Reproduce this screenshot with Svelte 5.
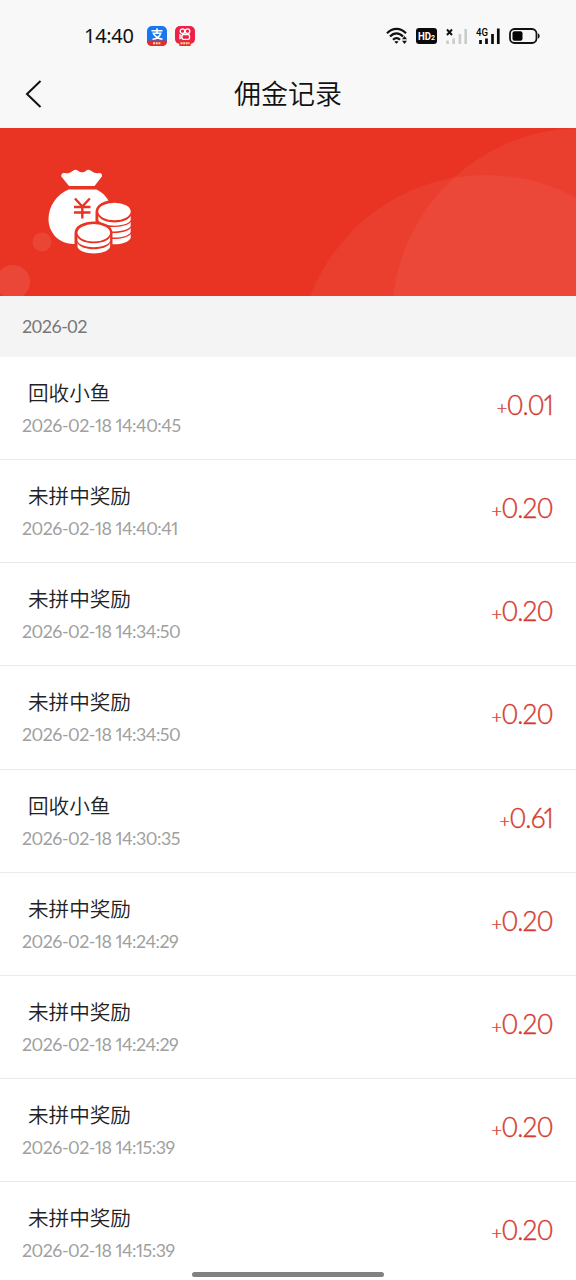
<script lang="ts">
  type CommissionRecord = { title: string; time: string; amount: string };

  const month = '2026-02';

  const records: CommissionRecord[] = [
    { title: '回收小鱼', time: '2026-02-18 14:40:45', amount: '0.01' },
    { title: '未拼中奖励', time: '2026-02-18 14:40:41', amount: '0.20' },
    { title: '未拼中奖励', time: '2026-02-18 14:34:50', amount: '0.20' },
    { title: '未拼中奖励', time: '2026-02-18 14:34:50', amount: '0.20' },
    { title: '回收小鱼', time: '2026-02-18 14:30:35', amount: '0.61' },
    { title: '未拼中奖励', time: '2026-02-18 14:24:29', amount: '0.20' },
    { title: '未拼中奖励', time: '2026-02-18 14:24:29', amount: '0.20' },
    { title: '未拼中奖励', time: '2026-02-18 14:15:39', amount: '0.20' },
    { title: '未拼中奖励', time: '2026-02-18 14:15:39', amount: '0.20' }
  ];
</script>

<div class="screen">
  <header>
    <div class="status-bar">
      <span class="clock">14:40</span>
      <svg class="app-icon" width="20" height="20" viewBox="0 0 20 20">
        <rect width="20" height="20" rx="5" fill="#1777f2" />
        <path d="M0 14.5h20v1a4.5 4.5 0 0 1-4.5 4.5h-11A4.5 4.5 0 0 1 0 15.5z" fill="#e52b2b" />
        <path d="M4.5 4.7h11M10 2.2v5M5.5 7.3h8.2c-1 3.2-4 5.7-8.2 5.9M6.5 8c2 2.5 5 4.7 9 5.2" fill="none" stroke="#fff" stroke-width="1.6" />
        <path d="M6 17.2h8" stroke="#ffdc9b" stroke-width="2" stroke-dasharray="2 .7" />
      </svg>
      <svg class="app-icon" width="20" height="20" viewBox="0 0 20 20">
        <rect width="20" height="18" rx="5" fill="#ef2048" />
        <path d="M3.5 14.5h13l-1 5.5h-11z" fill="#e43232" />
        <g fill="none" stroke="#fff" stroke-width="1.3">
          <circle cx="7.5" cy="5.2" r="2.3" />
          <circle cx="12.5" cy="5.2" r="2.3" />
          <rect x="7" y="8.5" width="7.5" height="4.8" rx="1.4" />
          <path d="M7 10.2 5 9v3.5l2-1" />
        </g>
        <path d="M5.5 17.2h9" stroke="#ffdc9b" stroke-width="2" stroke-dasharray="2 .6" />
      </svg>
      <div class="indicators">
        <svg width="22" height="18" viewBox="0 0 22 18">
          <g fill="none" stroke="#111" stroke-width="2.2">
            <path d="M1 6.3C6.5.5 14.5.5 20 6.3" />
            <path d="M4 9.6c4-4.2 9.2-4.2 13 0" />
            <path d="M7 12.7c2.2-2.2 5-2.2 7 0" />
          </g>
          <path d="M8.3 14.7q2.2-1.5 4.2 0l-2 2z" fill="#111" />
          <path d="m18.5 9 2.5 3.2h-5zM18.5 17l2.5-3.2h-5z" fill="#111" />
        </svg>
        <svg width="22" height="16" viewBox="0 0 22 16">
          <rect width="21" height="16" rx="3" fill="#0b0b0b" />
          <text class="hd" x="2" y="12" textLength="17" lengthAdjust="spacingAndGlyphs">HD<tspan class="hd-sim">2</tspan></text>
        </svg>
        <svg width="22" height="18" viewBox="0 0 22 18">
          <path d="m1 2.5 5 5.5M6 2.5 1 8" stroke="#111" stroke-width="1.9" />
          <path d="M1.5 17v-3.5M7.7 17v-5.5M13.9 17V7M19.7 17V2" stroke="#cbcbcb" stroke-width="2.6" />
        </svg>
        <svg class="signal" width="24" height="18" viewBox="0 0 24 18">
          <text class="network" x="0" y="9" textLength="12" lengthAdjust="spacingAndGlyphs">4G</text>
          <path d="M4.5 17v-4M10.5 17v-5.5M16.5 17V7M22.3 17V1.5" stroke="#0b0b0b" stroke-width="2.7" />
        </svg>
        <svg width="31" height="16" viewBox="0 0 31 16">
          <rect x="1" y="1" width="26.5" height="14" rx="4.5" fill="none" stroke="#111" stroke-width="1.8" />
          <rect x="3.5" y="3.3" width="10" height="9.4" rx="2" fill="#050505" />
          <path d="M29 5.5c2.2.5 2.2 4.5 0 5z" fill="#111" />
        </svg>
      </div>
    </div>
    <div class="nav-bar">
      <svg class="back" width="18" height="28" viewBox="0 0 18 28">
        <path d="M15.5 1 2 14l13.5 13" fill="none" stroke="#111" stroke-width="2" />
      </svg>
      <h1>佣金记录</h1>
    </div>
  </header>

  <svg class="banner" width="576" height="168" viewBox="0 0 576 168">
    <rect width="576" height="168" fill="#e93323" />
    <g fill="#fff">
      <circle cx="486" cy="235" r="188" opacity=".055" />
      <circle cx="582" cy="190" r="190" opacity=".055" />
      <circle cx="42" cy="114" r="9.5" opacity=".09" />
      <circle cx="13" cy="154" r="17" opacity=".1" />
    </g>

    <!-- money bag -->
    <g fill="#fff">
      <path d="M69 58 61.7 49c-1.2-1.8.3-4.4 2.8-4 3.5.8 6-.3 8.5-2.3 1.5-1.2 3.5-1.2 5 0 2.5 2 5.5 2 8 0 1.5-1.2 3.5-1.2 5 0 2.5 2 5 3 8 2.3 2.5-.4 4 2.2 2.5 4L94.5 58z" />
      <path d="M68.5 61.5h28c7 3.5 12 9 15 18L92 116H74C58 116 48.5 104 48.5 91c0-13 8-24 20-29.5z" />
    </g>
    <path d="m75 70.5 7.3 8 7.5-8M74 79h16.5M74 84.5h16.5M82.3 78.5v12" fill="none" stroke="#e93323" stroke-width="2.4" />

    <!-- back stack of coins -->
    <path d="M95.5 84c0-16 38-16 38 0v35h-38z" fill="#e93323" />
    <g fill="#fff">
      <ellipse cx="114.5" cy="83.5" rx="16.2" ry="8.7" />
      <path d="M98.3 88c5 8.5 27.5 8.5 32.4 0v4c-3 7.5-29.4 7.5-32.4 0z" />
      <path d="M108 99c9 .6 20-1 22.7-5v4c-2 4.5-13 6-22.7 5.5z" />
      <path d="M112 105c8 .3 16-1.5 18.7-5v4c-2 4.5-10.7 6-18.7 5.5z" />
      <path d="M112 111c8 .3 16-1.5 18.7-5v4c-2 4.8-10.7 6.5-18.7 6.2z" />
    </g>

    <!-- front stack of coins -->
    <path d="M74.5 118v-13c0-15.5 38-15.5 38 0v13z" fill="#e93323" />
    <g fill="#fff">
      <ellipse cx="93.8" cy="104.8" rx="16.3" ry="8.7" />
      <path d="M77.5 109c4 8.3 28.5 8.3 32.6 0v4c-3 8.2-29.6 8.2-32.6 0z" />
      <path d="M77.5 115c4 8.3 28.5 8.3 32.6 0v4c-3 8.5-29.6 8.5-32.6 0z" />
    </g>
  </svg>

  <div class="month">{month}</div>

  <ul class="records">
    {#each records as record}
      <li class="record">
        <div>
          <div class="record-title">{record.title}</div>
          <div class="record-time">{record.time}</div>
        </div>
        <div class="amount"><span class="sign">+</span>{record.amount}</div>
      </li>
    {/each}
  </ul>

  <div class="home-indicator"></div>
</div>

<style>
  :global(body) {
    background: #fff;
  }

  .screen {
    position: relative;
    width: 576px;
    height: 1280px;
    overflow: hidden;
    background: #fff;
    font-family: Lato, 'Noto Sans CJK SC', sans-serif;
  }

  header {
    height: 128px;
    background: #f8f8f8;
  }

  .status-bar {
    display: flex;
    align-items: center;
    height: 60px;
    padding: 12px 36px 0 84px;
    box-sizing: border-box;
  }

  .clock {
    width: 63px;
    padding-bottom: 1px;
    color: #111;
    font: 20px/26px 'Noto Sans', sans-serif;
    letter-spacing: -0.3px;
  }

  .app-icon {
    margin-right: 8px;
  }

  .indicators {
    display: flex;
    align-items: center;
    gap: 8px;
    margin-left: auto;
  }

  .signal {
    margin-right: 1px;
  }

  .hd,
  .network {
    font-family: Roboto, sans-serif;
    font-weight: 700;
  }

  .hd {
    fill: #fff;
    font-size: 11px;
  }

  .hd-sim {
    font-size: 8px;
  }

  .network {
    font-size: 11px;
    font-weight: 500;
  }

  .nav-bar {
    display: grid;
    grid-template-columns: 60px 1fr 60px;
    align-items: center;
    height: 68px;
  }

  .back {
    margin-left: 25px;
  }

  h1 {
    margin: 0;
    padding-bottom: 2px;
    color: #111;
    font: 350 27px/40px 'Noto Sans CJK SC', sans-serif;
    text-align: center;
  }

  .banner {
    display: block;
  }

  .month {
    height: 61px;
    padding-left: 22px;
    background: #f4f4f4;
    color: #777;
    font-size: 17.8px;
    line-height: 61px;
    letter-spacing: -0.5px;
  }

  .records {
    margin: 0;
    padding: 0;
    list-style: none;
  }

  .record {
    display: flex;
    justify-content: space-between;
    height: 103.15px;
    padding: 21px 23px 0 22px;
    border-bottom: 1.5px solid #ebebeb;
    box-sizing: border-box;
  }

  .record-title {
    padding-left: 6px;
    color: #222;
    font-size: 20.6px;
    font-weight: 350;
    line-height: 31px;
  }

  .record-time {
    color: #a0a0a0;
    font-size: 17.8px;
    font-variant-numeric: proportional-nums;
    line-height: 33px;
    letter-spacing: -0.5px;
  }

  .amount {
    color: #d43c32;
    font-size: 26.5px;
    font-variant-numeric: proportional-nums;
    font-weight: 300;
    line-height: 55px;
    letter-spacing: -0.8px;
    white-space: nowrap;
    -webkit-text-stroke: 0.4px #d43c32;
  }

  .sign {
    font-size: 18px;
    line-height: 1;
    vertical-align: 1.5px;
  }

  .home-indicator {
    position: absolute;
    bottom: 3px;
    left: 192px;
    width: 192px;
    height: 5px;
    border-radius: 3px;
    background: #818181;
  }
</style>
